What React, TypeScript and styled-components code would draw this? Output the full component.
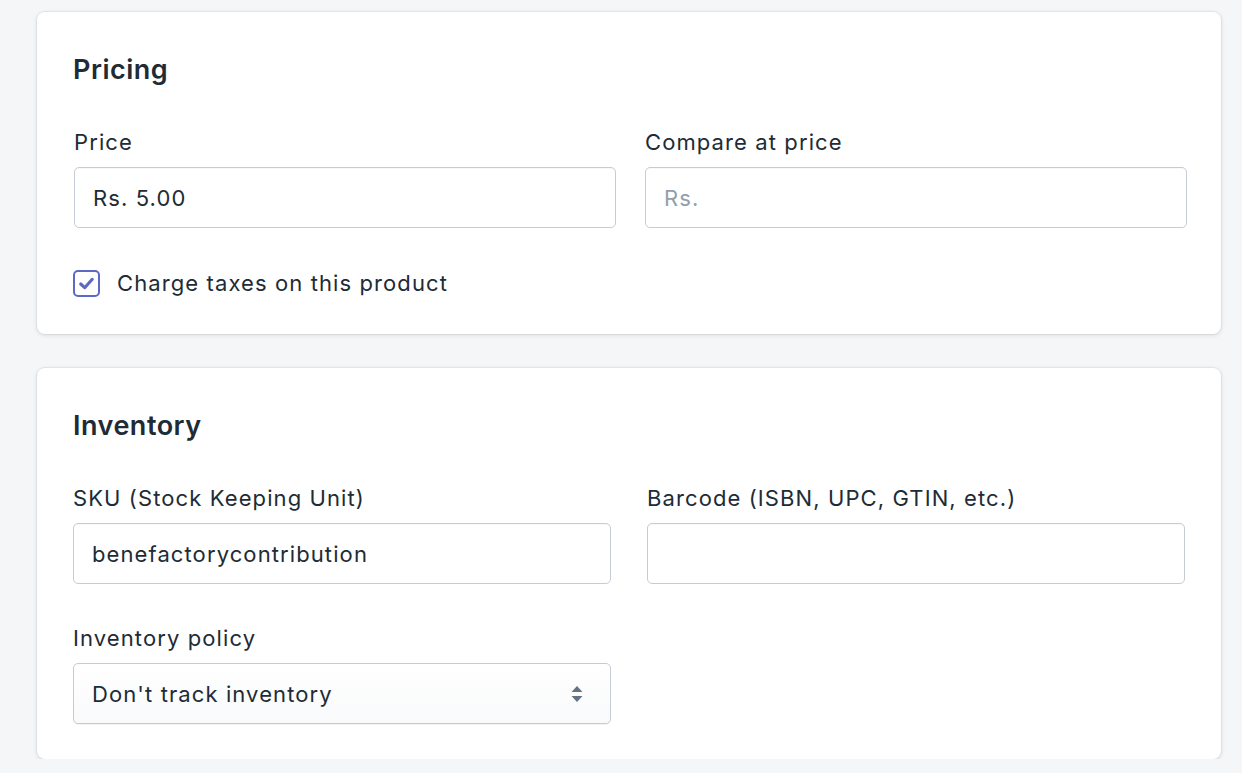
import React from "react";
import styled, { createGlobalStyle } from "styled-components";

const GlobalStyle = createGlobalStyle`
  html, body { margin: 0; padding: 0; background: #f4f6f8; }
  body {
    font-family: Inter, "Noto Sans", "Liberation Sans", sans-serif;
    color: #212b36;
    -webkit-font-smoothing: antialiased;
  }
  * { box-sizing: border-box; }
`;

const Page = styled.div`
  display: flex;
  flex-direction: column;
  gap: 34px;
  padding: 12px 21px 0 37px;
  width: 1242px;
`;

const Card = styled.section<{ $bottom: number }>`
  background: #ffffff;
  border-radius: 8px;
  box-shadow: 0 0 0 1px rgba(63, 63, 68, 0.06), 0 1px 4px 0 rgba(63, 63, 68, 0.16);
  padding: 40px 34px ${(p) => p.$bottom}px 36px;
  width: 1184px;
`;

const Heading = styled.h2`
  margin: 0;
  font-size: 27px;
  line-height: 36px;
  font-weight: 600;
  letter-spacing: 0.5px;
  color: #212b36;
`;

const Grid = styled.div<{ $col: number; $gap: number; $shift?: number }>`
  display: grid;
  grid-template-columns: ${(p) => p.$col}px ${(p) => p.$col}px;
  column-gap: ${(p) => p.$gap}px;
  margin-top: 38px;
  margin-left: ${(p) => p.$shift ?? 0}px;
`;

const Field = styled.div`
  display: flex;
  flex-direction: column;
`;

const Label = styled.label`
  font-size: 22px;
  line-height: 32px;
  letter-spacing: 1.1px;
  color: #212b36;
  margin-bottom: 9px;
`;

const Input = styled.div<{ $placeholder?: boolean }>`
  height: 61px;
  border: 1px solid #c4cdd5;
  border-radius: 5px;
  background: #ffffff;
  box-shadow: inset 0 1px 0 0 rgba(99, 115, 129, 0.05);
  display: flex;
  align-items: center;
  padding: 0 18px;
  font-size: 22px;
  letter-spacing: 1.1px;
  color: ${(p) => (p.$placeholder ? "#919eab" : "#212b36")};
`;

const Select = styled(Input)`
  justify-content: space-between;
  background: linear-gradient(180deg, #ffffff, #f9fafb);
  box-shadow: 0 1px 0 0 rgba(22, 29, 37, 0.05);
  padding-right: 26px;
`;

const CheckRow = styled.div`
  display: flex;
  align-items: center;
  gap: 17px;
  margin-top: 42px;
  font-size: 22px;
  letter-spacing: 1.1px;
  line-height: 27px;
`;

const Box = styled.span`
  width: 27px;
  height: 27px;
  border: 2px solid #5c6ac4;
  border-radius: 5px;
  display: flex;
  align-items: center;
  justify-content: center;
  background: #fff;
`;

const PolicyField = styled(Field)`
  margin-top: 38px;
  width: 538px;
`;

const Arrows = () => (
  <svg width="14" height="20" viewBox="0 0 14 20">
    <path d="M7 2 L12.5 8 H1.5 Z" fill="#637381" />
    <path d="M7 18 L12.5 12 H1.5 Z" fill="#637381" />
  </svg>
);

export default function App() {
  return (
    <>
      <GlobalStyle />
      <Page>
        <Card $bottom={37}>
          <Heading>Pricing</Heading>
          <Grid $col={542} $gap={29} $shift={1}>
            <Field>
              <Label>Price</Label>
              <Input>Rs. 5.00</Input>
            </Field>
            <Field>
              <Label>Compare at price</Label>
              <Input $placeholder>Rs.</Input>
            </Field>
          </Grid>
          <CheckRow>
            <Box>
              <svg width="21" height="21" viewBox="0 0 20 20">
                <path
                  d="M4.5 10.5 L8.3 14 L15.5 6"
                  fill="none"
                  stroke="#5c6ac4"
                  strokeWidth="3"
                  strokeLinecap="round"
                  strokeLinejoin="round"
                />
              </svg>
            </Box>
            Charge taxes on this product
          </CheckRow>
        </Card>
        <Card $bottom={35}>
          <Heading>Inventory</Heading>
          <Grid $col={538} $gap={36}>
            <Field>
              <Label>SKU (Stock Keeping Unit)</Label>
              <Input>benefactorycontribution</Input>
            </Field>
            <Field>
              <Label>Barcode (ISBN, UPC, GTIN, etc.)</Label>
              <Input />
            </Field>
          </Grid>
          <PolicyField>
            <Label>Inventory policy</Label>
            <Select>
              Don't track inventory
              <Arrows />
            </Select>
          </PolicyField>
        </Card>
      </Page>
    </>
  );
}
